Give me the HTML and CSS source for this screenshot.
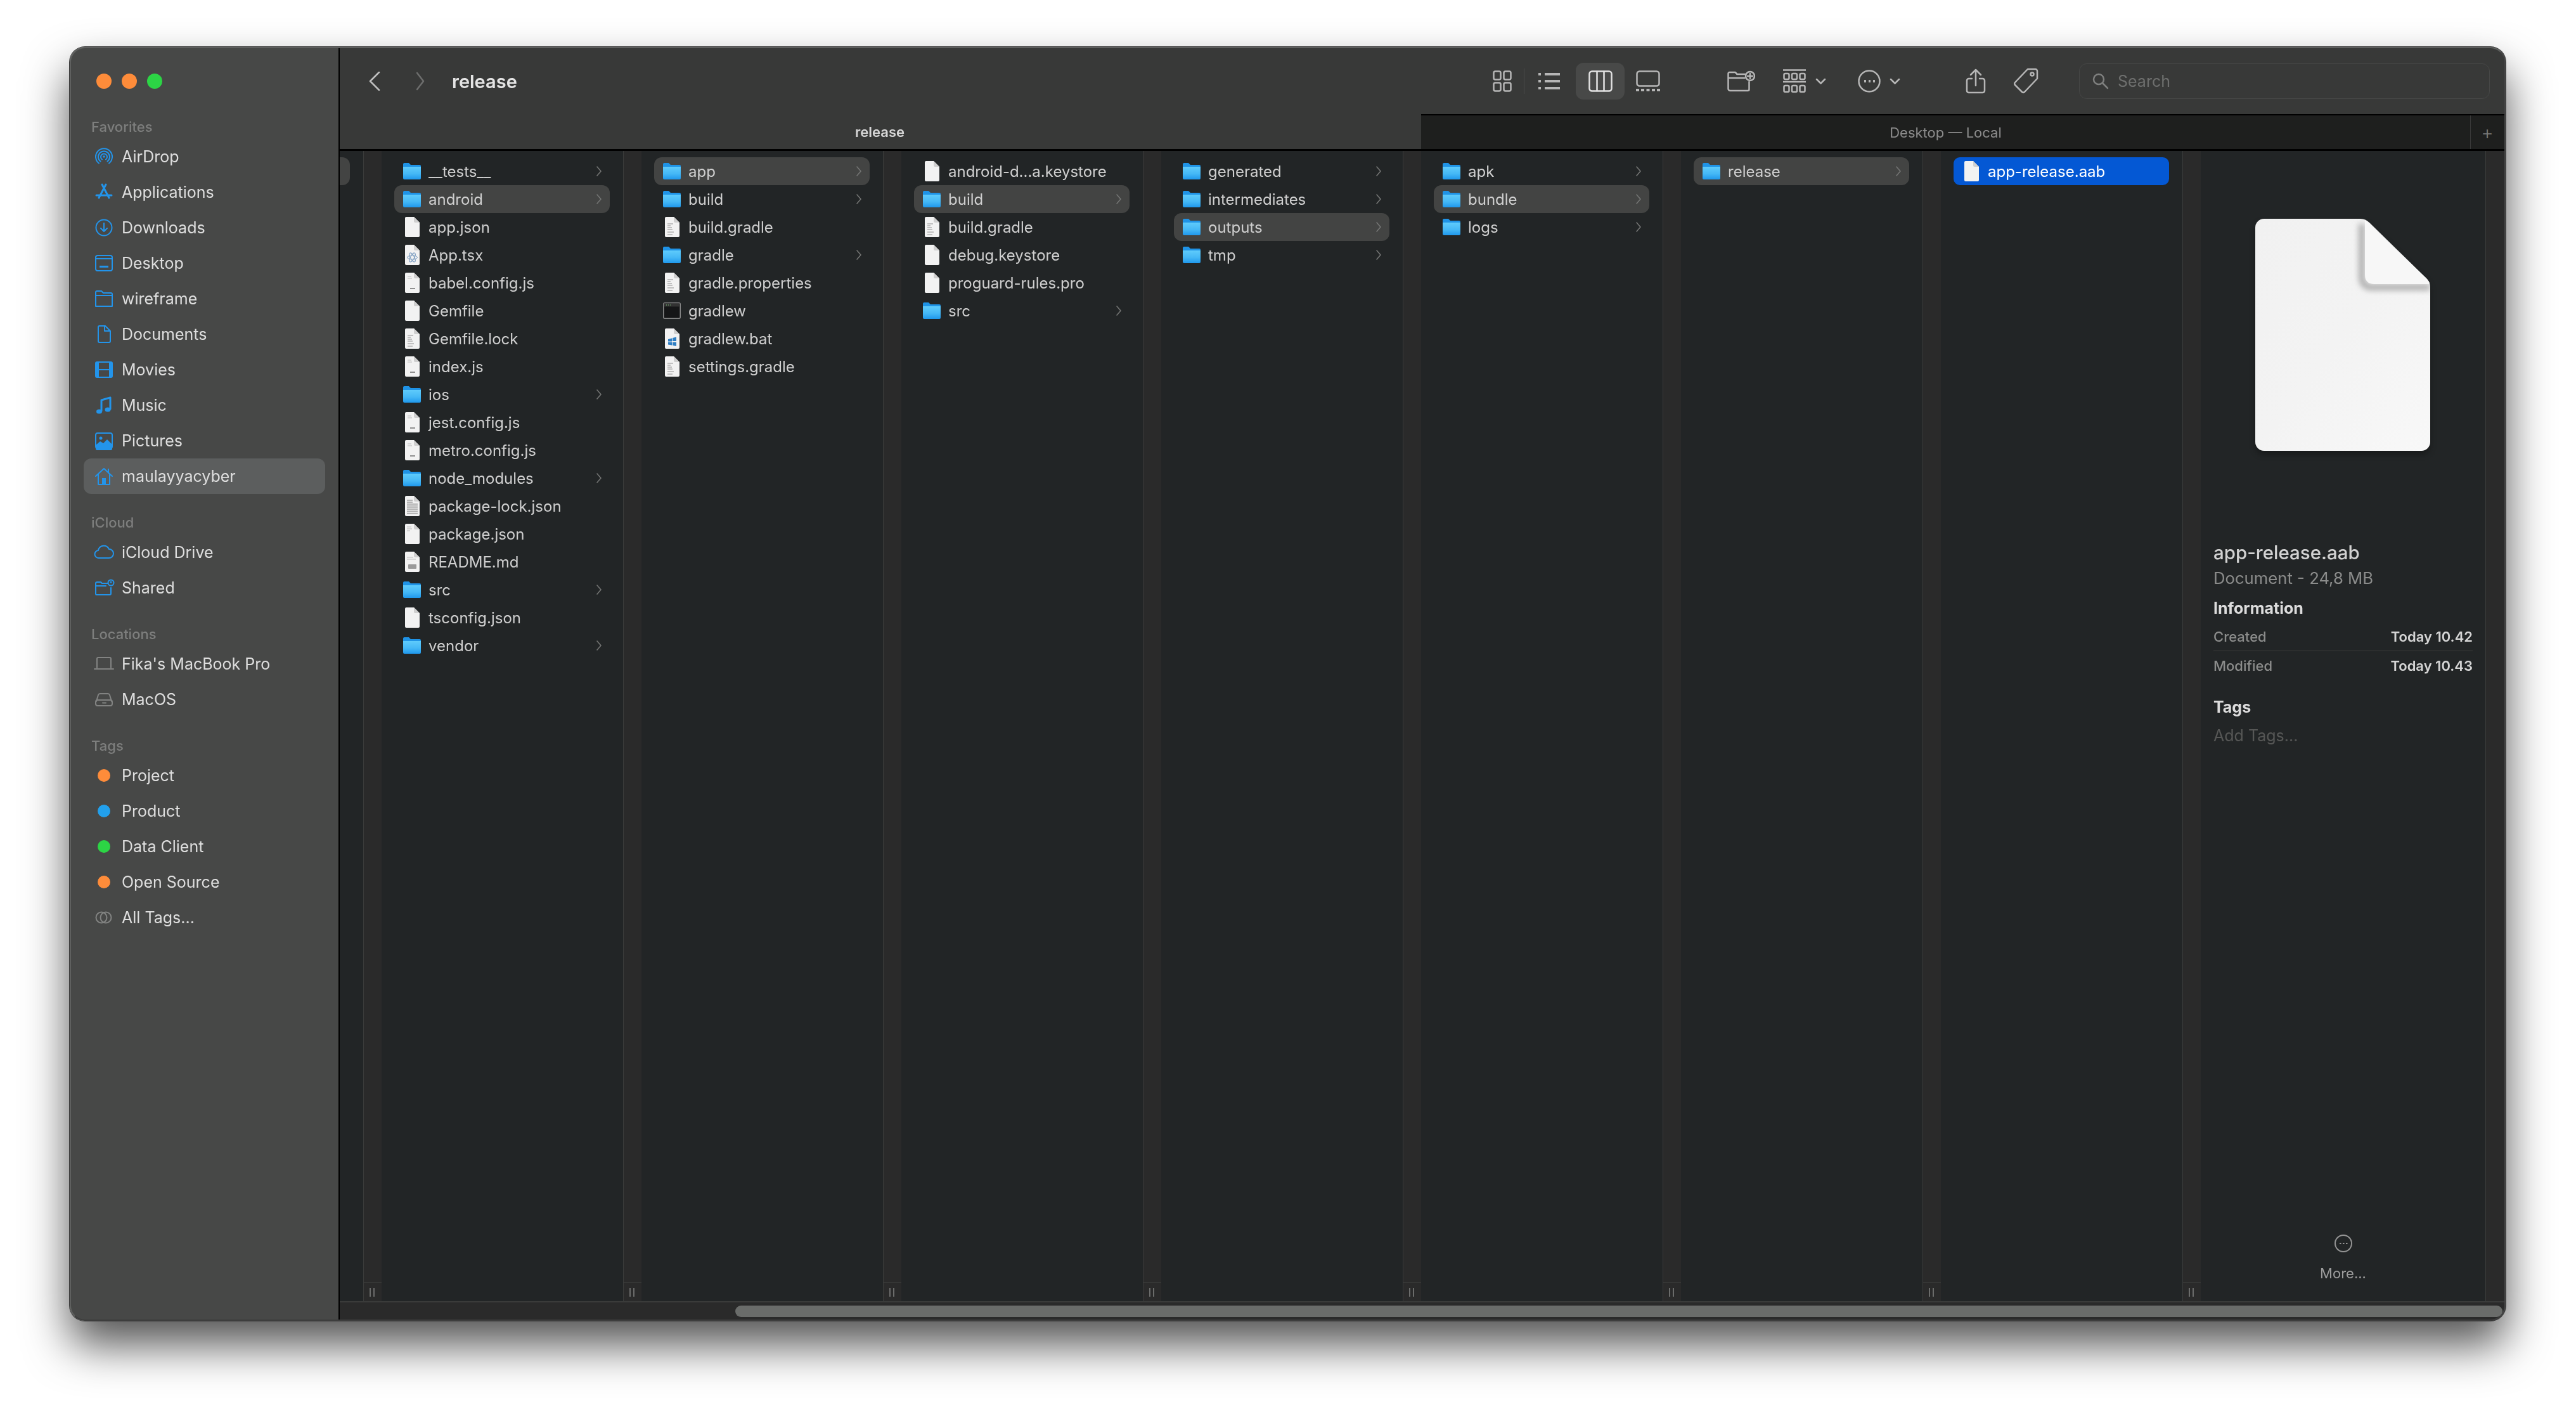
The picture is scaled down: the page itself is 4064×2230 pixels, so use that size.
FILE: index.html
```html
<!DOCTYPE html>
<html lang="en">
<head>
<meta charset="utf-8">
<title>release</title>
<link rel="stylesheet" href="styles.css">
</head>
<body>
<svg class="defs" width="0" height="0" aria-hidden="true">
  <defs>
    <linearGradient id="fg" x1="0" y1="0" x2="0" y2="1"><stop offset="0" stop-color="#5fcbfb"/><stop offset=".55" stop-color="#45b8f6"/><stop offset="1" stop-color="#1f98ec"/></linearGradient>
    <linearGradient id="pg" x1="0" y1="0" x2="1" y2="1"><stop offset="0" stop-color="#f1f1f1"/><stop offset=".5" stop-color="#f3f3f3"/><stop offset="1" stop-color="#f8f8f8"/></linearGradient>
    <filter id="soft" x="-30%" y="-30%" width="160%" height="160%"><feGaussianBlur stdDeviation="5"/></filter>
    <clipPath id="sheet"><path d="M14 0H166q8 0 14 6L270 94q6 6 6 14V352a14 14 0 0 1-14 14H14a14 14 0 0 1-14-14V14A14 14 0 0 1 14 0z"/></clipPath>
    <symbol id="folder" viewBox="0 0 28 26"><path fill="#1f93e6" d="M0 2a2 2 0 0 1 2-2h7l3 3h14a2 2 0 0 1 2 2v6H0z"/><path fill="url(#fg)" d="M0 6h28v18a2 2 0 0 1-2 2H2a2 2 0 0 1-2-2z"/></symbol>
    <symbol id="page" viewBox="0 0 23 32"><path fill="#f2f2f2" d="M2 0h12l9 9v21a2 2 0 0 1-2 2H2a2 2 0 0 1-2-2V2a2 2 0 0 1 2-2z"/><path fill="#cfcfcf" d="M14 0l9 9h-7a2 2 0 0 1-2-2z"/></symbol>
    <symbol id="text" viewBox="0 0 23 32"><use href="#page"/><path stroke="#8f8f8f" stroke-width="1.2" d="M4 11h9M4 14h5M4 17h7M4 20h8M4 24h10M4 28h8" fill="none"/></symbol>
    <symbol id="js" viewBox="0 0 23 32"><use href="#page"/><path stroke="#777" stroke-width="1.6" d="M8 25h8" fill="none"/><path stroke="#bbb" stroke-width="1" d="M4 6h6M4 9h7" fill="none"/></symbol>
    <symbol id="tsx" viewBox="0 0 23 32"><use href="#page"/><g fill="none" stroke="#7f9fc2" stroke-width="1"><ellipse cx="11.500" cy="20" rx="8" ry="3"/><ellipse cx="11.500" cy="20" rx="8" ry="3" transform="rotate(60 11.500 20)"/><ellipse cx="11.500" cy="20" rx="8" ry="3" transform="rotate(120 11.500 20)"/></g></symbol>
    <symbol id="bat" viewBox="0 0 23 32"><use href="#page"/><path fill="#2f7fc4" d="M5 17l6-1.500v5H5zM12 15l6-1.500v6.500h-6zM5 21.500h6v5l-6-1zM12 21.500h6v6.500l-6-1.500z"/></symbol>
    <symbol id="dense" viewBox="0 0 23 32"><use href="#page"/><path stroke="#a3a3a3" stroke-width="1.3" d="M3 7h9M3 10h9M3 13h17M3 16h17M3 19h17M3 22h17M3 25h17M3 28h17" fill="none"/></symbol>
    <symbol id="dots" viewBox="0 0 23 32"><use href="#page"/><path stroke="#bbb" stroke-width="1.2" d="M3 5h7M3 8h8M3 11h5" fill="none"/></symbol>
    <symbol id="md" viewBox="0 0 23 32"><use href="#page"/><path stroke="#bdbdbd" stroke-width="1.2" d="M3 9h10M3 12h14" fill="none"/><rect x="5" y="20" width="13" height="7" rx="1" fill="#9a9a9a"/></symbol>
    <symbol id="term" viewBox="0 0 28 26"><rect x=".75" y=".75" width="26.500" height="24.500" rx="2" fill="#151617" stroke="#8a8a8a" stroke-width="1.500"/><rect x="1.500" y="1.500" width="25" height="5" fill="#333"/><path stroke="#7ed07e" stroke-width="1" d="M5 4h1M8 4h1M11 4h1"/></symbol>
    <symbol id="chev" viewBox="0 0 8 16"><path d="M1 1l6 7-6 7" fill="none" stroke="currentColor" stroke-width="1.600" stroke-linecap="round" stroke-linejoin="round"/></symbol>
  </defs>
</svg>

<div class="window">
  <aside class="sidebar">
    <div class="lights"><i class="light orange"></i><i class="light orange"></i><i class="light green"></i></div>

    <section class="group">
      <h2 class="group-title">Favorites</h2>
      <div class="item"><svg class="ico" viewBox="0 0 28 28"><path d="M6 24.500A13 13 0 1 1 22 24.500M8.500 21.500A9 9 0 1 1 19.500 21.500M11 18.500A5 5 0 1 1 17 18.500"/><circle class="fill" cx="14" cy="14" r="1.800"/></svg><span class="item-label">AirDrop</span></div>
      <div class="item"><svg class="ico" viewBox="0 0 28 28"><path class="thick" d="M11 2l11 21M17 2L6 23M2 19h24"/></svg><span class="item-label">Applications</span></div>
      <div class="item"><svg class="ico" viewBox="0 0 28 28"><circle cx="14" cy="14" r="12.500"/><path d="M14 7v13M9 15l5 5 5-5"/></svg><span class="item-label">Downloads</span></div>
      <div class="item"><svg class="ico" viewBox="0 0 28 28"><rect x="1" y="2" width="26" height="24" rx="3"/><path d="M1 7h26"/><rect class="fill" x="7" y="18" width="14" height="3"/></svg><span class="item-label">Desktop</span></div>
      <div class="item"><svg class="ico" viewBox="0 0 28 28"><path d="M1 26V4a2 2 0 0 1 2-2h7l3 3h12a2 2 0 0 1 2 2v19zM1 9h26"/></svg><span class="item-label">wireframe</span></div>
      <div class="item"><svg class="ico" viewBox="0 0 28 28"><path d="M5 3a2 2 0 0 1 2-2h9l8 8v16a2 2 0 0 1-2 2H7a2 2 0 0 1-2-2zM15 2v7h8"/></svg><span class="item-label">Documents</span></div>
      <div class="item"><svg class="ico" viewBox="0 0 28 28"><rect x="1" y="2" width="26" height="24" rx="2"/><path class="fill" d="M1 2h5v24H1zM22 2h5v24h-5z"/><path d="M6 14h16"/></svg><span class="item-label">Movies</span></div>
      <div class="item"><svg class="ico" viewBox="0 0 28 28"><path class="thick" d="M10 23V6l14-4v18"/><ellipse class="fill" cx="6.500" cy="24" rx="4.500" ry="3.500"/><ellipse class="fill" cx="20" cy="21" rx="4.500" ry="3.500"/></svg><span class="item-label">Music</span></div>
      <div class="item"><svg class="ico" viewBox="0 0 28 28"><rect x="1" y="2" width="26" height="24" rx="3"/><circle class="fill" cx="9" cy="10" r="2.500"/><path class="fill" d="M1 21l7-6 5 3 6-6 8 8v7a2 2 0 0 1-2 2H3a2 2 0 0 1-2-2z"/></svg><span class="item-label">Pictures</span></div>
      <div class="item active"><svg class="ico" viewBox="0 0 28 28"><path d="M1 14L14 2l13 12M5 11v16h18V11M21 3v6"/><rect class="fill" x="11" y="17" width="6" height="10"/></svg><span class="item-label">maulayyacyber</span></div>
    </section>

    <section class="group">
      <h2 class="group-title">iCloud</h2>
      <div class="item"><svg class="ico wide" viewBox="0 0 28 28"><path d="M7 24a6 6 0 0 1-1-12 9 9 0 0 1 17-2 7 7 0 0 1 0 14z" transform="translate(-1 -1)"/></svg><span class="item-label">iCloud Drive</span></div>
      <div class="item"><svg class="ico wide" viewBox="0 0 28 28"><path d="M1 24V7a2 2 0 0 1 2-2h6l2 2h9M1 11h16M1 24a1 1 0 0 0 1 1h21a2 2 0 0 0 2-2V14"/><circle cx="25" cy="6" r="4.500"/><circle class="fill" cx="25" cy="5" r="1.500"/></svg><span class="item-label">Shared</span></div>
    </section>

    <section class="group">
      <h2 class="group-title">Locations</h2>
      <div class="item"><svg class="ico gray wide" viewBox="0 0 28 28"><path d="M3 20V6a2 2 0 0 1 2-2h18a2 2 0 0 1 2 2v14M-1 22h30"/></svg><span class="item-label">Fika's MacBook Pro</span></div>
      <div class="item"><svg class="ico gray" viewBox="0 0 28 28"><path d="M2 17l3-10a3 3 0 0 1 3-2h12a3 3 0 0 1 3 2l3 10"/><rect x="1" y="15" width="26" height="9" rx="3"/><path d="M12 19.500h5"/></svg><span class="item-label">MacOS</span></div>
    </section>

    <section class="group">
      <h2 class="group-title">Tags</h2>
      <div class="item"><i class="tag orange"></i><span class="item-label">Project</span></div>
      <div class="item"><i class="tag blue"></i><span class="item-label">Product</span></div>
      <div class="item"><i class="tag green"></i><span class="item-label">Data Client</span></div>
      <div class="item"><i class="tag orange"></i><span class="item-label">Open Source</span></div>
      <div class="item"><svg class="ico gray" viewBox="0 0 28 28"><circle cx="10" cy="14" r="8.500"/><circle cx="17" cy="14" r="8.500"/></svg><span class="item-label">All Tags...</span></div>
    </section>
  </aside>

  <main class="main">
    <header class="toolbar">
      <svg class="back" width="18" height="30" viewBox="0 0 18 30"><path d="M16 1L2 15l14 14"/></svg>
      <svg class="forward" width="14" height="30" viewBox="0 0 14 30"><path d="M2 2l10 13L2 28"/></svg>
      <h1 class="title">release</h1>
      <div class="tools">
        <svg class="tool m-none" width="30" height="34" viewBox="0 0 30 34"><rect x="1.500" y="1.500" width="11" height="13" rx="2.500"/><rect x="17.500" y="1.500" width="11" height="13" rx="2.500"/><rect x="1.500" y="19.500" width="11" height="13" rx="2.500"/><rect x="17.500" y="19.500" width="11" height="13" rx="2.500"/></svg>
        <i class="tool-sep"></i>
        <svg class="tool m-list" width="34" height="28" viewBox="0 0 34 28"><path class="fat" d="M10 3h24M10 14h24M10 25h24"/><path class="fat" d="M0 3h4M0 14h4M0 25h4"/></svg>
        <div class="view-on"><svg class="tool bright" width="38" height="34" viewBox="0 0 38 34"><rect x="1.500" y="1.500" width="35" height="31" rx="4"/><path d="M13.500 2v30M24.500 2v30"/></svg></div>
        <svg class="tool m-gallery" width="38" height="34" viewBox="0 0 38 34"><rect x="1.500" y="1.500" width="35" height="23" rx="4"/><path class="fat" d="M0 31h5M8 31h5M16.500 31h5M25 31h5M33 31h5"/></svg>
        <svg class="tool m-newfolder" width="44" height="34" viewBox="0 0 44 34"><path d="M1.500 29V5a2 2 0 0 1 2-2h9l3 3h13M1.500 12h26M1.500 29a3 3 0 0 0 3 3h28a2 2 0 0 0 2-2V18"/><circle cx="36" cy="9" r="7"/><path d="M36 5v8M32 9h8"/></svg>
        <svg class="tool m-group" width="36" height="38" viewBox="0 0 36 38"><path d="M0 1.500h36M0 20h36"/><rect x="1.500" y="7" width="8" height="9" rx="2"/><rect x="14" y="7" width="8" height="9" rx="2"/><rect x="26.500" y="7" width="8" height="9" rx="2"/><rect x="1.500" y="26" width="8" height="10" rx="2"/><rect x="14" y="26" width="8" height="10" rx="2"/><rect x="26.500" y="26" width="8" height="10" rx="2"/></svg>
        <svg class="tool m-chev" width="17" height="10" viewBox="0 0 17 10"><path d="M2 2l6.500 6.500L15 2"/></svg>
        <svg class="tool m-action" width="36" height="36" viewBox="0 0 36 36"><circle cx="18" cy="18" r="16.500"/><path class="fat" d="M10 18h3M17 18h3M24 18h3"/></svg>
        <svg class="tool m-chev2" width="17" height="10" viewBox="0 0 17 10"><path d="M2 2l6.500 6.500L15 2"/></svg>
        <svg class="tool m-share" width="32" height="40" viewBox="0 0 32 40"><path d="M16 27V2M8 10l8-8 8 8M10 16H5a3 3 0 0 0-3 3v16a3 3 0 0 0 3 3h22a3 3 0 0 0 3-3V19a3 3 0 0 0-3-3h-5"/></svg>
        <svg class="tool m-tag" width="39" height="42" viewBox="0 0 39 42"><path d="M22 2h12a3 3 0 0 1 3 3v12L17 38a3 3 0 0 1-4 0L2 27a3 3 0 0 1 0-4z"/><circle cx="29" cy="10" r="2.500"/></svg>
        <div class="search">
          <svg class="search-ico" width="26" height="26" viewBox="0 0 26 26"><circle cx="10" cy="10" r="8"/><path d="M16 16l8 8"/></svg>
          <span class="search-text">Search</span>
        </div>
      </div>
    </header>

    <nav class="tabs">
      <div class="tab tab-on">release</div>
      <div class="tab">Desktop — Local</div>
      <div class="tab-add">+</div>
    </nav>

    <div class="browser">
      <div class="col col-partial">
        <div class="stub"></div>
      </div>
      <div class="grip"><div class="handle"><i></i><i></i></div></div>

      <div class="col">
        <div class="row"><svg class="i-folder"><use href="#folder"/></svg><span class="name">__tests__</span><svg class="chev"><use href="#chev"/></svg></div>
        <div class="row sel"><svg class="i-folder"><use href="#folder"/></svg><span class="name">android</span><svg class="chev"><use href="#chev"/></svg></div>
        <div class="row"><svg class="i-file"><use href="#page"/></svg><span class="name">app.json</span></div>
        <div class="row"><svg class="i-file"><use href="#tsx"/></svg><span class="name">App.tsx</span></div>
        <div class="row"><svg class="i-file"><use href="#js"/></svg><span class="name">babel.config.js</span></div>
        <div class="row"><svg class="i-file"><use href="#page"/></svg><span class="name">Gemfile</span></div>
        <div class="row"><svg class="i-file"><use href="#text"/></svg><span class="name">Gemfile.lock</span></div>
        <div class="row"><svg class="i-file"><use href="#js"/></svg><span class="name">index.js</span></div>
        <div class="row"><svg class="i-folder"><use href="#folder"/></svg><span class="name">ios</span><svg class="chev"><use href="#chev"/></svg></div>
        <div class="row"><svg class="i-file"><use href="#js"/></svg><span class="name">jest.config.js</span></div>
        <div class="row"><svg class="i-file"><use href="#js"/></svg><span class="name">metro.config.js</span></div>
        <div class="row"><svg class="i-folder"><use href="#folder"/></svg><span class="name">node_modules</span><svg class="chev"><use href="#chev"/></svg></div>
        <div class="row"><svg class="i-file"><use href="#dense"/></svg><span class="name">package-lock.json</span></div>
        <div class="row"><svg class="i-file"><use href="#dots"/></svg><span class="name">package.json</span></div>
        <div class="row"><svg class="i-file"><use href="#md"/></svg><span class="name">README.md</span></div>
        <div class="row"><svg class="i-folder"><use href="#folder"/></svg><span class="name">src</span><svg class="chev"><use href="#chev"/></svg></div>
        <div class="row"><svg class="i-file"><use href="#page"/></svg><span class="name">tsconfig.json</span></div>
        <div class="row"><svg class="i-folder"><use href="#folder"/></svg><span class="name">vendor</span><svg class="chev"><use href="#chev"/></svg></div>
      </div>
      <div class="grip"><div class="handle"><i></i><i></i></div></div>

      <div class="col">
        <div class="row sel"><svg class="i-folder"><use href="#folder"/></svg><span class="name">app</span><svg class="chev"><use href="#chev"/></svg></div>
        <div class="row"><svg class="i-folder"><use href="#folder"/></svg><span class="name">build</span><svg class="chev"><use href="#chev"/></svg></div>
        <div class="row"><svg class="i-file"><use href="#text"/></svg><span class="name">build.gradle</span></div>
        <div class="row"><svg class="i-folder"><use href="#folder"/></svg><span class="name">gradle</span><svg class="chev"><use href="#chev"/></svg></div>
        <div class="row"><svg class="i-file"><use href="#text"/></svg><span class="name">gradle.properties</span></div>
        <div class="row"><svg class="i-folder"><use href="#term"/></svg><span class="name">gradlew</span></div>
        <div class="row"><svg class="i-file"><use href="#bat"/></svg><span class="name">gradlew.bat</span></div>
        <div class="row"><svg class="i-file"><use href="#text"/></svg><span class="name">settings.gradle</span></div>
      </div>
      <div class="grip"><div class="handle"><i></i><i></i></div></div>

      <div class="col">
        <div class="row"><svg class="i-file"><use href="#page"/></svg><span class="name">android-d...a.keystore</span></div>
        <div class="row sel"><svg class="i-folder"><use href="#folder"/></svg><span class="name">build</span><svg class="chev"><use href="#chev"/></svg></div>
        <div class="row"><svg class="i-file"><use href="#text"/></svg><span class="name">build.gradle</span></div>
        <div class="row"><svg class="i-file"><use href="#page"/></svg><span class="name">debug.keystore</span></div>
        <div class="row"><svg class="i-file"><use href="#page"/></svg><span class="name">proguard-rules.pro</span></div>
        <div class="row"><svg class="i-folder"><use href="#folder"/></svg><span class="name">src</span><svg class="chev"><use href="#chev"/></svg></div>
      </div>
      <div class="grip"><div class="handle"><i></i><i></i></div></div>

      <div class="col">
        <div class="row"><svg class="i-folder"><use href="#folder"/></svg><span class="name">generated</span><svg class="chev"><use href="#chev"/></svg></div>
        <div class="row"><svg class="i-folder"><use href="#folder"/></svg><span class="name">intermediates</span><svg class="chev"><use href="#chev"/></svg></div>
        <div class="row sel"><svg class="i-folder"><use href="#folder"/></svg><span class="name">outputs</span><svg class="chev"><use href="#chev"/></svg></div>
        <div class="row"><svg class="i-folder"><use href="#folder"/></svg><span class="name">tmp</span><svg class="chev"><use href="#chev"/></svg></div>
      </div>
      <div class="grip"><div class="handle"><i></i><i></i></div></div>

      <div class="col">
        <div class="row"><svg class="i-folder"><use href="#folder"/></svg><span class="name">apk</span><svg class="chev"><use href="#chev"/></svg></div>
        <div class="row sel"><svg class="i-folder"><use href="#folder"/></svg><span class="name">bundle</span><svg class="chev"><use href="#chev"/></svg></div>
        <div class="row"><svg class="i-folder"><use href="#folder"/></svg><span class="name">logs</span><svg class="chev"><use href="#chev"/></svg></div>
      </div>
      <div class="grip"><div class="handle"><i></i><i></i></div></div>

      <div class="col">
        <div class="row sel"><svg class="i-folder"><use href="#folder"/></svg><span class="name">release</span><svg class="chev"><use href="#chev"/></svg></div>
      </div>
      <div class="grip"><div class="handle"><i></i><i></i></div></div>

      <div class="col">
        <div class="row focus"><svg class="i-file"><use href="#page"/></svg><span class="name">app-release.aab</span></div>
      </div>
      <div class="grip"><div class="handle"><i></i><i></i></div></div>

      <section class="preview">
        <svg class="doc" width="276" height="366" viewBox="0 0 276 366">
          <path fill="url(#pg)" d="M14 0H166q8 0 14 6L270 94q6 6 6 14V352a14 14 0 0 1-14 14H14a14 14 0 0 1-14-14V14A14 14 0 0 1 14 0z"/>
          <g clip-path="url(#sheet)"><path fill="none" stroke="#a8a8a8" stroke-width="9" filter="url(#soft)" d="M168 8V92q0 16 16 16h92"/></g>
          <path fill="#f7f7f7" d="M173 2l3 2 94 90q5 5 5 9H188q-15 0-15-15z"/>
        </svg>
        <h3 class="p-name">app-release.aab</h3>
        <p class="p-kind">Document - 24,8 MB</p>
        <h4 class="p-head">Information</h4>
        <div class="p-meta"><span class="p-key">Created</span><span class="p-val">Today 10.42</span></div>
        <div class="p-meta p-last"><span class="p-key">Modified</span><span class="p-val">Today 10.43</span></div>
        <h4 class="p-head p-tags">Tags</h4>
        <p class="p-add">Add Tags...</p>
        <div class="p-more">
          <svg width="28" height="28" viewBox="0 0 28 28"><circle cx="14" cy="14" r="13"/><path d="M8 14h2.500M13 14h2.500M18 14h2.500"/></svg>
          <span class="p-more-text">More...</span>
        </div>
      </section>
      <div class="tail"></div>
    </div>

    <div class="hscroll"><div class="thumb"></div></div>
  </main>
</div>
</body>
</html>
```

FILE: styles.css
```css
* { box-sizing: border-box; }
html, body { margin: 0; padding: 0; }
body {
  width: 4064px;
  height: 2230px;
  overflow: hidden;
  background: #fff;
  font-family: Inter, "Liberation Sans", sans-serif;
  padding: 74px 0 0 110px;
}
h1, h2, h3, h4, p { margin: 0; font: inherit; }
i { display: block; }
.defs { position: absolute; }

.window {
  width: 3843px;
  height: 2009px;
  display: flex;
  border-radius: 24px;
  overflow: hidden;
  box-shadow: 0 0 0 1px #3c3c3c, 0 38px 70px rgba(0, 0, 0, .68);
  position: relative;
}
.window::after {
  content: "";
  position: absolute;
  inset: 0;
  border-radius: 24px;
  border: 2px solid #5f605f;
  border-bottom-color: #3d3d3d;
  border-right-color: #454545;
  pointer-events: none;
}

/* sidebar */
.sidebar {
  width: 424px;
  flex: none;
  background: #474847;
  padding: 107px 21px 0 22px;
}
.lights { display: flex; gap: 16px; height: 0; margin: -65px 0 65px 20px; }
.light { width: 24px; height: 24px; border-radius: 50%; flex: none; }
.orange { background: #fe8c3a; }
.green { background: #2cd545; }
.blue { background: #22a0ec; }
.group { margin-bottom: 26px; }
.group-title {
  height: 38px;
  line-height: 38px;
  padding-left: 12px;
  font-size: 22px;
  font-weight: 500;
  color: #7d7e7d;
  filter: blur(.5px);
}
.item {
  height: 56px;
  display: flex;
  align-items: center;
  padding-left: 18px;
  border-radius: 12px;
}
.item.active { background: #5c5e5e; }
.item-label {
  margin-left: 14px;
  font-size: 25px;
  color: #dedede;
  filter: blur(.5px);
  white-space: nowrap;
}
.ico {
  width: 28px;
  height: 28px;
  flex: none;
  overflow: visible;
  fill: none;
  stroke: #2394ea;
  stroke-width: 2;
  stroke-linecap: round;
  stroke-linejoin: round;
}
.ico .fill { fill: #2394ea; stroke: none; }
.ico .thick { stroke-width: 3; }
.ico.gray { stroke: #828382; }
.tag { width: 20px; height: 20px; border-radius: 50%; margin: 0 18px 0 4px; flex: none; }
.tag + .item-label { margin-left: 0; }

/* main */
.main {
  flex: 1;
  min-width: 0;
  display: flex;
  flex-direction: column;
  border-left: 2px solid #000;
  background: #2a2a2a;
}
.toolbar {
  height: 106px;
  flex: none;
  background: #383938;
  display: flex;
  align-items: center;
  padding: 2px 25px 0 46px;
}
.back, .forward { fill: none; stroke-linecap: round; stroke-linejoin: round; stroke-width: 2.500; flex: none; }
.back { stroke: #c0c0c0; }
.forward { stroke: #6d6e6d; margin-left: 56px; }
.title {
  margin-left: 43px;
  font-size: 29px;
  font-weight: 600;
  color: #e4e4e4;
  filter: blur(.5px);
}
.tools { margin-left: auto; display: flex; align-items: center; }
.tool {
  flex: none;
  fill: none;
  stroke: #b6b6b6;
  stroke-width: 2.500;
  stroke-linecap: round;
  stroke-linejoin: round;
  filter: blur(.4px);
}
.tool .fat { stroke-width: 4; stroke-linecap: butt; }
.tool.bright { stroke: #e2e2e2; }
.tool-sep { width: 1px; height: 40px; background: #4b4c4b; margin-left: 19px; flex: none; }
.m-list { margin-left: 22px; }
.view-on {
  margin-left: 25px;
  width: 77px;
  height: 58px;
  border-radius: 12px;
  background: #484948;
  display: flex;
  align-items: center;
  justify-content: center;
  flex: none;
}
.m-gallery { margin-left: 18px; }
.m-newfolder { margin-left: 106px; }
.m-group { margin-left: 44px; }
.m-chev { margin-left: 15px; }
.m-action { margin-left: 50px; }
.m-chev2 { margin-left: 14px; }
.m-share { margin-left: 103px; }
.m-tag { margin-left: 44px; }
.search {
  margin-left: 64px;
  width: 648px;
  height: 56px;
  flex: none;
  display: flex;
  align-items: center;
  padding-left: 20px;
  border: 1px solid #464746;
  border-radius: 12px;
}
.search-ico { fill: none; stroke: #7e7f7e; stroke-width: 2.500; stroke-linecap: round; filter: blur(.4px); }
.search-text { margin-left: 14px; font-size: 25px; color: #6e6f6e; filter: blur(.5px); }

/* tabs */
.tabs {
  height: 58px;
  flex: none;
  display: flex;
  background: #1e1f1e;
  border-top: 2px solid #000;
  border-bottom: 3px solid #000;
}
.tab {
  width: 1655px;
  display: flex;
  align-items: center;
  justify-content: center;
  font-size: 22px;
  color: #8c8c8c;
  filter: blur(.5px);
}
.tab-on {
  width: 1706px;
  padding-right: 2px;
  background: #383938;
  margin-top: -2px;
  color: #d6d6d6;
  font-weight: 600;
}
.tab-add {
  flex: 1;
  display: flex;
  align-items: center;
  justify-content: center;
  padding-right: 3px;
  font-size: 30px;
  font-weight: 300;
  color: #7a7a7a;
  border-left: 1px solid #3a3a3a;
}

/* browser */
.browser { flex: 1; min-height: 0; display: flex; }
.col {
  width: 381px;
  flex: none;
  background: #222526;
  padding: 10px 21px 0 20px;
}
.col-partial { width: 37px; padding: 10px 0 0; }
.stub { width: 16px; height: 44px; background: #434443; border-radius: 0 12px 12px 0; }
.grip {
  width: 29px;
  flex: none;
  background: #2a2a2a;
  border-left: 1px solid #3b3c3b;
  display: flex;
  flex-direction: column;
  justify-content: flex-end;
}
.handle {
  height: 30px;
  border-top: 1px solid #363736;
  display: flex;
  justify-content: center;
  align-items: center;
  gap: 4px;
  padding-right: 2px;
}
.handle i { width: 2px; height: 14px; background: #6b6c6b; }
.row {
  height: 44px;
  display: flex;
  align-items: center;
  padding: 0 13px 0 0;
  border-radius: 12px;
  position: relative;
}
.sel { background: #434443; }
.focus { background: #0458d4; border-radius: 10px; }
.focus .name { color: #fff; }
.i-folder { width: 28px; height: 26px; margin: 0 12px 0 14px; flex: none; }
.i-file { width: 23px; height: 32px; margin: 0 14px 0 17px; flex: none; }
.name {
  font-size: 24px;
  color: #cfcfcf;
  filter: blur(.5px);
  white-space: nowrap;
}
.chev { width: 8px; height: 16px; margin-left: auto; color: #747574; flex: none; }

/* preview */
.preview {
  width: 450px;
  flex: none;
  background: #222526;
  border-right: 1px solid #3b3c3b;
  padding: 107px 20px 0 20px;
  display: flex;
  flex-direction: column;
  position: relative;
}
.doc { align-self: center; flex: none; margin-right: 2px; filter: drop-shadow(0 6px 5px rgba(0, 0, 0, .3)); }
.p-name { margin-top: 143px; font-size: 29.500px; line-height: 34px; font-weight: 500; color: #d2d2d2; filter: blur(.5px); }
.p-kind { margin-top: 7px; font-size: 25.700px; line-height: 34px; color: #8b8c8b; filter: blur(.5px); }
.p-head { font-size: 25px; line-height: 32px; font-weight: 700; color: #dcdcdc; filter: blur(.4px); margin-top: 14px; }
.p-meta {
  height: 46px;
  display: flex;
  align-items: center;
  justify-content: space-between;
  font-size: 22px;
  border-bottom: 1px solid #3b3c3b;
}
.p-head + .p-meta { margin-top: 6px; }
.p-last { border-bottom: 0; }
.p-key { color: #8b8c8b; font-weight: 500; filter: blur(.4px); }
.p-val { color: #d4d4d4; font-weight: 600; filter: blur(.4px); }
.p-tags { margin-top: 26px; }
.p-add { margin-top: 13px; font-size: 25px; line-height: 32px; color: #565756; filter: blur(.5px); }
.p-more {
  position: absolute;
  left: 0;
  right: 0;
  bottom: 31px;
  display: flex;
  flex-direction: column;
  align-items: center;
  gap: 20px;
}
.p-more svg { fill: none; stroke: #939393; stroke-width: 2; }
.p-more-text { font-size: 22px; line-height: 26px; color: #9c9c9c; filter: blur(.5px); }
.tail { flex: 1; background: #2a2a2a; }

/* horizontal scrollbar */
.hscroll {
  height: 31px;
  flex: none;
  background: #2a2a2a;
  border-top: 2px solid #3a3b3a;
  padding: 5px 5px 0 624px;
}
.thumb { height: 18px; border-radius: 9px; background: #6a6c6a; }
```
